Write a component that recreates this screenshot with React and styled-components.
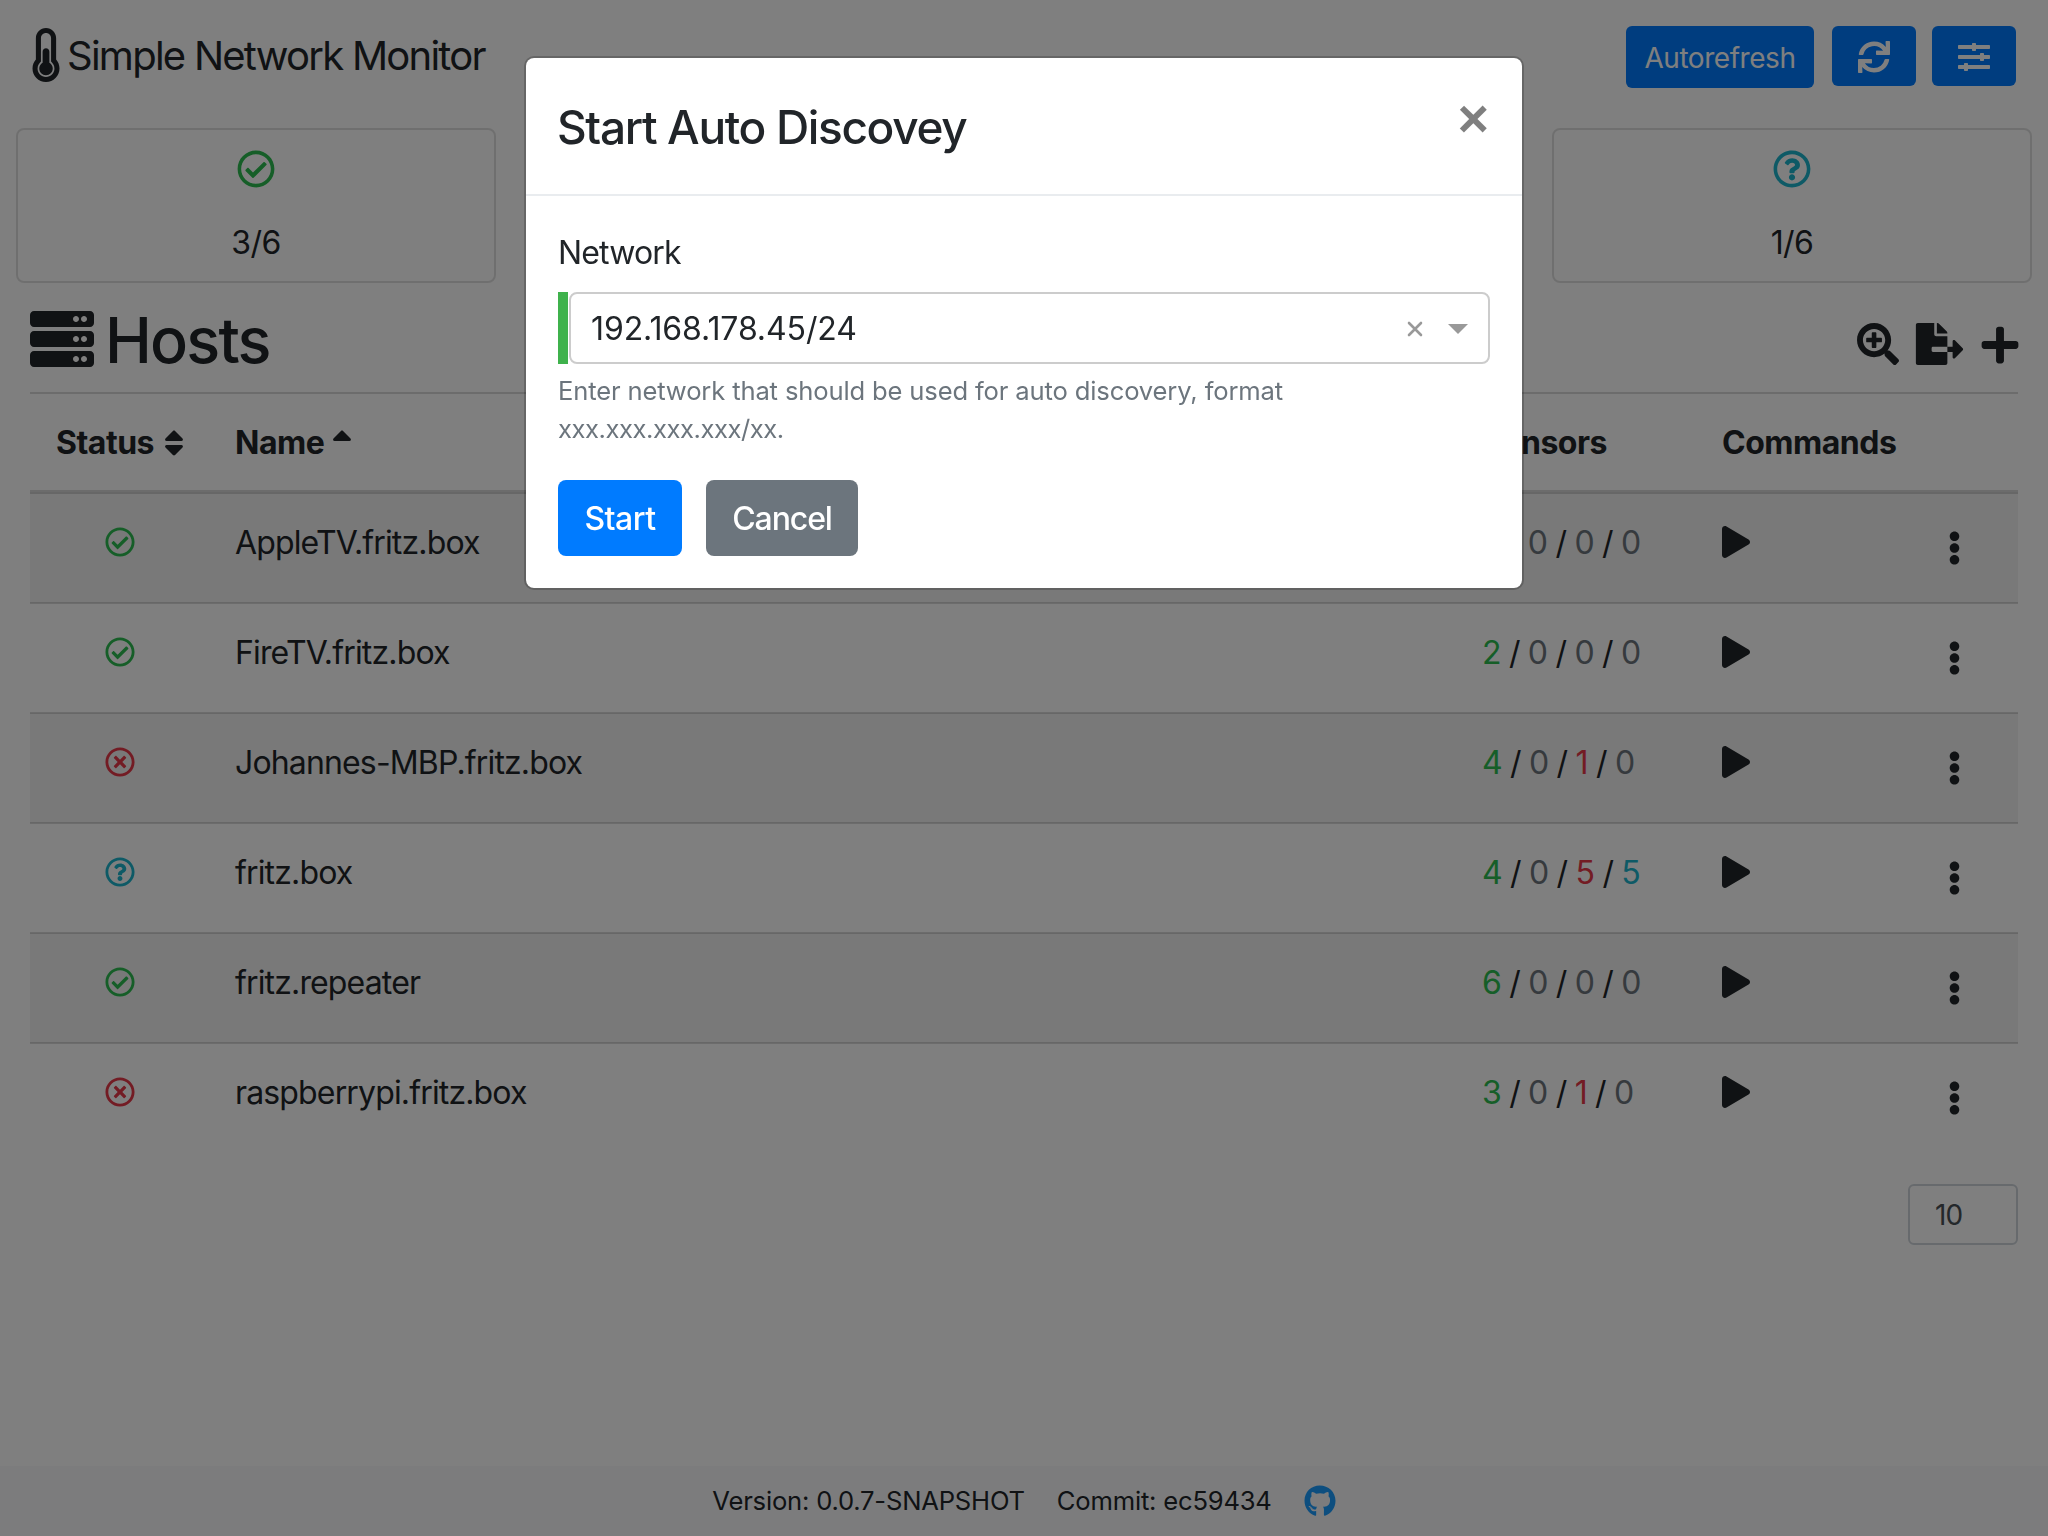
import React from "react";
import styled, { createGlobalStyle } from "styled-components";
import {
  FaThermometerHalf,
  FaSync,
  FaSlidersH,
  FaRegCheckCircle,
  FaRegTimesCircle,
  FaRegQuestionCircle,
  FaRegDotCircle,
  FaServer,
  FaSearchPlus,
  FaFileExport,
  FaPlus,
  FaSort,
  FaSortUp,
  FaPlay,
  FaEllipsisV,
  FaGithub,
} from "react-icons/fa";

const GlobalStyle = createGlobalStyle`
  html, body { margin: 0; padding: 0; background: #fff; }
  body {
    font-family: Inter, "Liberation Sans", sans-serif;
    font-size: 32px;
    line-height: 50px;
    color: #212529;
    letter-spacing: -0.85px;
  }
  * { box-sizing: border-box; }
`;

const colors = {
  ok: "#2cbd50",
  error: "#e63848",
  info: "#1cb4cc",
  muted: "#6c757d",
};

const Page = styled.div`
  min-height: 1536px;
  display: flex;
  flex-direction: column;
`;

const Main = styled.main`
  flex: 1;
`;

const Navbar = styled.nav`
  height: 114px;
  padding: 26px 32px 0 32px;
  display: flex;
  justify-content: space-between;
  align-items: flex-start;
`;

const Brand = styled.div`
  display: flex;
  align-items: center;
  gap: 7px;
  font-size: 40px;
  line-height: 60px;
  letter-spacing: -1.75px;
  font-weight: 400;
  svg { width: 28px; height: 54px; margin-top: -2px; }
`;

const NavButtons = styled.div`
  display: flex;
  align-items: flex-start;
  gap: 16px;
`;

const NavButton = styled.button`
  height: ${(p) => (p.$text ? 62 : 60)}px;
  width: ${(p) => (p.$text ? "188px" : "84px")};
  margin-right: ${(p) => (p.$text ? "2px" : "0")};
  border: 0;
  border-radius: 6px;
  background: #007bff;
  color: #fff;
  font: inherit;
  font-size: 28px;
  letter-spacing: -0.45px;
  padding: 2px 0 0;
  display: flex;
  align-items: center;
  justify-content: center;
  svg { width: 32px; height: 32px; }
`;

const CardRow = styled.section`
  padding: 14px 16px 0;
  display: grid;
  grid-template-columns: repeat(4, 480px);
  gap: 32px;
`;

const Card = styled.div`
  height: 155px;
  border: 2px solid rgba(0, 0, 0, 0.125);
  border-radius: 8px;
  padding-top: 20px;
  display: flex;
  flex-direction: column;
  align-items: center;
  svg { width: 38px; height: 38px; color: ${(p) => p.$color}; }
`;

const CardValue = styled.div`
  margin-top: 30px;
  letter-spacing: -0.6px;
`;

const HostsHead = styled.header`
  margin: 0 30px;
  height: 111px;
  border-bottom: 2px solid rgba(0, 0, 0, 0.15);
  display: flex;
  align-items: flex-start;
  justify-content: space-between;
`;

const HostsTitle = styled.h1`
  margin: 0;
  padding-top: 20px;
  display: flex;
  align-items: center;
  gap: 11px;
  font-size: 63px;
  line-height: 74px;
  font-weight: 500;
  letter-spacing: -1.8px;
  svg { width: 64px; height: 64px; margin-top: -2px; }
`;

const HostsActions = styled.div`
  padding-top: 40px;
  display: flex;
  align-items: flex-start;
  svg { display: block; }
`;

const ExportIcon = styled(FaFileExport)`
  width: 49px;
  height: 42px;
  margin-left: 16px;
`;

const AddIcon = styled(FaPlus)`
  width: 42px;
  height: 42px;
  margin: 1px -3px 0 15px;
`;

const Table = styled.table`
  width: 1988px;
  margin: 0 30px;
  border-collapse: collapse;
  table-layout: fixed;
`;

const Th = styled.th`
  width: ${(p) => p.$width};
  padding: 24px ${(p) => p.$inset || 24}px 22px;
  height: 96px;
  border-bottom: 4px solid rgba(0, 0, 0, 0.15);
  text-align: left;
  font-weight: 700;
  letter-spacing: -0.5px;
  white-space: nowrap;
  svg { width: 20px; height: 32px; margin-left: ${(p) => p.$gap || 8}px; vertical-align: -5px; }
`;

const Row = styled.tr`
  background: ${(p) => (p.$striped ? "rgba(0, 0, 0, 0.05)" : "transparent")};
`;

const Td = styled.td`
  padding: 24px;
  height: 108px;
  vertical-align: top;
  border-top: 2px solid rgba(0, 0, 0, 0.15);
  tr:first-child & { border-top: 0; }
`;

const StatusIcon = styled.span`
  display: block;
  height: 48px;
  padding: 9px 2px 0 0;
  color: ${(p) => p.$color};
  svg { display: block; margin: 0 auto; width: 30px; height: 30px; }
`;

const Sensors = styled.div`
  white-space: pre;
  letter-spacing: -0.8px;
`;

const Count = styled.span`
  color: ${(p) => p.$color};
`;

const Commands = styled.div`
  height: 60px;
  display: flex;
  align-items: flex-start;
  justify-content: space-between;
  padding-right: 33px;
`;

const PlayIcon = styled(FaPlay)`
  margin-top: 8px;
  width: 28px;
  height: 32px;
`;

const MenuIcon = styled(FaEllipsisV)`
  margin-top: 13px;
  width: 13px;
  height: 34px;
`;

const Pager = styled.div`
  margin: 32px 30px 0 0;
  display: flex;
  justify-content: flex-end;
`;

const PageSize = styled.div`
  width: 110px;
  height: 61px;
  border: 2px solid #ced4da;
  border-radius: 6px;
  padding: 5px 0 0 25px;
  color: #495057;
  font-size: 28px;
  line-height: 48px;
`;

const Footer = styled.footer`
  height: 70px;
  background: #f8f9fa;
  display: flex;
  align-items: center;
  justify-content: center;
  gap: 32px;
  font-size: 25.6px;
  letter-spacing: -0.2px;
`;

const GithubLink = styled.a`
  color: #1a9cff;
  display: flex;
  svg { width: 32px; height: 32px; }
`;

const Backdrop = styled.div`
  position: fixed;
  inset: 0;
  background: rgba(0, 0, 0, 0.5);
`;

const ModalLayer = styled.div`
  position: fixed;
  inset: 0;
  display: flex;
  justify-content: center;
  align-items: flex-start;
  padding-top: 56px;
`;

const Modal = styled.div`
  width: 1000px;
  background: #fff;
  border: 2px solid rgba(0, 0, 0, 0.2);
  background-clip: padding-box;
  border-radius: 10px;
`;

const ModalHeader = styled.div`
  height: 138px;
  padding: 32px 32px 32px 31px;
  border-bottom: 2px solid #e9ecef;
  display: flex;
  justify-content: space-between;
  align-items: flex-start;
`;

const ModalTitle = styled.h5`
  margin: 0;
  font-size: 46px;
  line-height: 74px;
  font-weight: 500;
  letter-spacing: -1.35px;
`;

const CloseButton = styled.button`
  border: 0;
  background: none;
  padding: 0;
  margin: -8px 1px 0 0;
  font-family: "Liberation Sans", sans-serif;
  font-size: 54px;
  font-weight: 700;
  line-height: 72px;
  color: rgba(0, 0, 0, 0.5);
`;

const ModalBody = styled.div`
  padding: 32px;
`;

const Label = styled.label`
  display: block;
  margin-bottom: 14px;
`;

const SelectWrap = styled.div`
  height: 72px;
  display: flex;
  border-left: 10px solid #3fb24c;
`;

const SelectBox = styled.div`
  flex: 1;
  margin-left: 1px;
  border: 2px solid #ccc;
  border-radius: 8px;
  padding: 0 20px;
  display: flex;
  align-items: center;
`;

const SelectValue = styled.span`
  flex: 1;
  padding-top: 2px;
  letter-spacing: -0.1px;
`;

const ClearMark = styled.svg`
  width: 16px;
  height: 16px;
  margin: 2px 25px 0 0;
  color: #999;
`;

const DropArrow = styled.span`
  width: 0;
  height: 0;
  margin-top: 2px;
  border-left: 10px solid transparent;
  border-right: 10px solid transparent;
  border-top: 10px solid #999;
`;

const HelpText = styled.small`
  display: block;
  margin-top: 8px;
  font-size: 25.6px;
  line-height: 38px;
  letter-spacing: -0.15px;
  color: #6c757d;
`;

const HelpFormat = styled.span`
  letter-spacing: -0.45px;
`;

const Actions = styled.div`
  margin-top: 32px;
  display: flex;
  gap: 24px;
`;

const Btn = styled.button`
  width: ${(p) => p.$width}px;
  height: 76px;
  padding: 2px 0 0;
  border: 0;
  border-radius: 8px;
  font: inherit;
  font-weight: 500;
  letter-spacing: ${(p) => (p.$primary ? "-0.5px" : "-1.1px")};
  color: #fff;
  background: ${(p) => (p.$primary ? "#007bff" : "#6c757d")};
`;

const hosts = [
  { name: "AppleTV.fritz.box", status: "ok", counts: [2, 0, 0, 0] },
  { name: "FireTV.fritz.box", status: "ok", counts: [2, 0, 0, 0] },
  { name: "Johannes-MBP.fritz.box", status: "error", counts: [4, 0, 1, 0] },
  { name: "fritz.box", status: "info", counts: [4, 0, 5, 5] },
  { name: "fritz.repeater", status: "ok", counts: [6, 0, 0, 0] },
  { name: "raspberrypi.fritz.box", status: "error", counts: [3, 0, 1, 0] },
];

const statusIcons = {
  ok: FaRegCheckCircle,
  error: FaRegTimesCircle,
  info: FaRegQuestionCircle,
};

const countColor = (index, value) => {
  if (value === 0) return colors.muted;
  return [colors.ok, colors.muted, colors.error, colors.info][index];
};

const App = () => (
  <Page>
    <GlobalStyle />
    <Main>
      <Navbar>
        <Brand>
          <FaThermometerHalf />
          Simple Network Monitor
        </Brand>
        <NavButtons>
          <NavButton $text>Autorefresh</NavButton>
          <NavButton><FaSync /></NavButton>
          <NavButton><FaSlidersH /></NavButton>
        </NavButtons>
      </Navbar>

      <CardRow>
        <Card $color={colors.ok}><FaRegCheckCircle /><CardValue>3/6</CardValue></Card>
        <Card $color={colors.error}><FaRegTimesCircle /><CardValue>2/6</CardValue></Card>
        <Card $color="#ffc107"><FaRegDotCircle /><CardValue>0/6</CardValue></Card>
        <Card $color={colors.info}><FaRegQuestionCircle /><CardValue>1/6</CardValue></Card>
      </CardRow>

      <HostsHead>
        <HostsTitle><FaServer />Hosts</HostsTitle>
        <HostsActions>
          <FaSearchPlus size={42} />
          <ExportIcon />
          <AddIcon />
        </HostsActions>
      </HostsHead>

      <Table>
        <thead>
          <tr>
            <Th $width="181px" $inset={26} $gap={10}>Status<FaSort /></Th>
            <Th $width="1247px">Name<FaSortUp /></Th>
            <Th $width="240px">Sensors</Th>
            <Th $width="320px">Commands</Th>
          </tr>
        </thead>
        <tbody>
          {hosts.map((host, i) => {
            const Icon = statusIcons[host.status];
            return (
              <Row key={host.name} $striped={i % 2 === 0}>
                <Td><StatusIcon $color={colors[host.status]}><Icon /></StatusIcon></Td>
                <Td>{host.name}</Td>
                <Td>
                  <Sensors>
                    {host.counts.map((value, k) => (
                      <React.Fragment key={k}>
                        {k > 0 && " / "}
                        <Count $color={countColor(k, value)}>{value}</Count>
                      </React.Fragment>
                    ))}
                  </Sensors>
                </Td>
                <Td>
                  <Commands>
                    <PlayIcon />
                    <MenuIcon />
                  </Commands>
                </Td>
              </Row>
            );
          })}
        </tbody>
      </Table>

      <Pager><PageSize>10</PageSize></Pager>
    </Main>

    <Footer>
      <span>Version: 0.0.7-SNAPSHOT</span>
      <span>Commit: ec59434</span>
      <GithubLink><FaGithub /></GithubLink>
    </Footer>

    <Backdrop />
    <ModalLayer>
      <Modal>
        <ModalHeader>
          <ModalTitle>Start Auto Discovey</ModalTitle>
          <CloseButton>×</CloseButton>
        </ModalHeader>
        <ModalBody>
          <Label>Network</Label>
          <SelectWrap>
            <SelectBox>
              <SelectValue>192.168.178.45/24</SelectValue>
              <ClearMark viewBox="0 0 16 16">
                <path d="M2 2 L14 14 M14 2 L2 14" stroke="currentColor" strokeWidth="2.6" strokeLinecap="round" />
              </ClearMark>
              <DropArrow />
            </SelectBox>
          </SelectWrap>
          <HelpText>
            Enter network that should be used for auto discovery, format <HelpFormat>xxx.xxx.xxx.xxx/xx.</HelpFormat>
          </HelpText>
          <Actions>
            <Btn $primary $width={124}>Start</Btn>
            <Btn $width={152}>Cancel</Btn>
          </Actions>
        </ModalBody>
      </Modal>
    </ModalLayer>
  </Page>
);

export default App;
